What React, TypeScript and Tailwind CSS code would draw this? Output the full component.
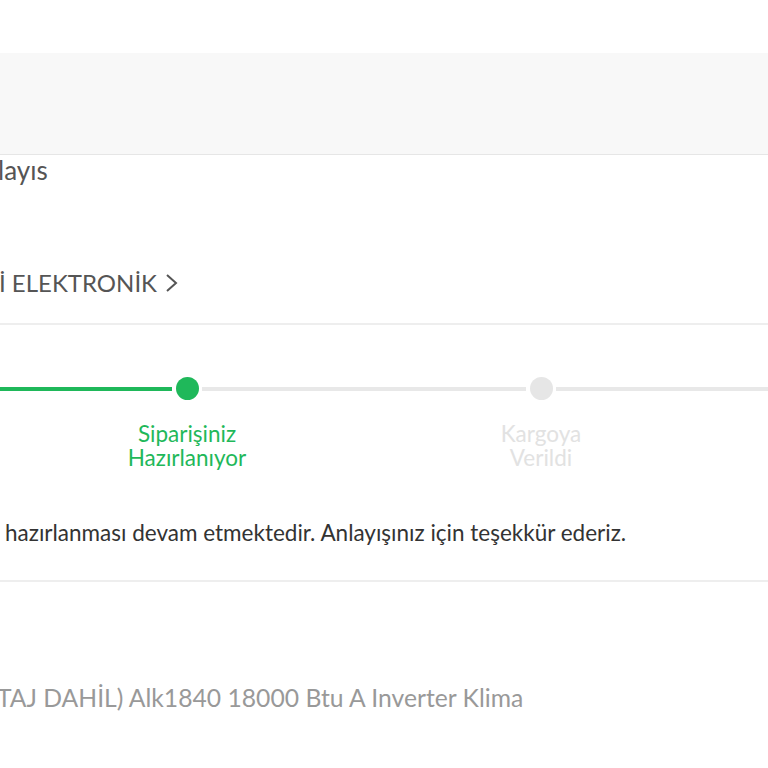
export default function App() {
  return (
    <div
      className="w-[768px] h-[768px] overflow-hidden bg-white"
      style={{ fontFamily: 'Lato, "Noto Sans", sans-serif' }}
    >
      <div className="h-[53px]" />
      <div className="h-[102px] bg-[#f8f8f8] border-b border-[#e6e6e6]" />

      {/* title row */}
      <div className="h-[60px] text-[26px] leading-[30px] text-[#555] -ml-[2px]">layıs</div>

      {/* seller row */}
      <div className="h-[110px] border-b-2 border-[#eeeeee] flex items-center pt-[28px] text-[#555]">
        <span className="text-[24px] leading-[30px] -ml-[1px]">İ ELEKTRONİK</span>
        <svg className="ml-[7px] w-[16px] h-[22px]" viewBox="0 0 16 22" fill="none" stroke="#555" strokeWidth="2">
          <path d="M3 3l9 8-9 8" />
        </svg>
      </div>

      {/* stepper */}
      <div className="h-[205px] border-b-2 border-[#eeeeee]">
        <div className="flex items-center h-[23px] mt-[52px]">
          <div className="w-[172px] h-[4px] bg-[#1fb85a]" />
          <div className="ml-[4px] w-[23px] h-[23px] rounded-full bg-[#1fb85a]" />
          <div className="ml-[3px] w-[324px] h-[4px] bg-[#e8e8e8]" />
          <div className="ml-[4px] w-[23px] h-[23px] rounded-full bg-[#e6e6e6]" />
          <div className="ml-[3px] flex-1 h-[4px] bg-[#e8e8e8]" />
        </div>
        <div className="flex mt-[22px] text-[22.5px] leading-[24px] text-center">
          <div className="w-[387px] flex justify-start">
            <div className="ml-[87px] w-[200px] text-[#1fb85a]">Siparişiniz<br />Hazırlanıyor</div>
          </div>
          <div className="ml-[54px] w-[200px] text-[#e2e2e2]">Kargoya<br />Verildi</div>
        </div>
        <div className="mt-[48px] pl-[5px] text-[22.5px] leading-[30px] text-[#333]">
          hazırlanması devam etmektedir. Anlayışınız için teşekkür ederiz.
        </div>
      </div>

      {/* product */}
      <div className="pt-[101px] -ml-[3px] text-[24.7px] leading-[30px] text-[#999]">
        TAJ DAHİL) Alk1840 18000 Btu A Inverter Klima
      </div>
    </div>
  );
}
